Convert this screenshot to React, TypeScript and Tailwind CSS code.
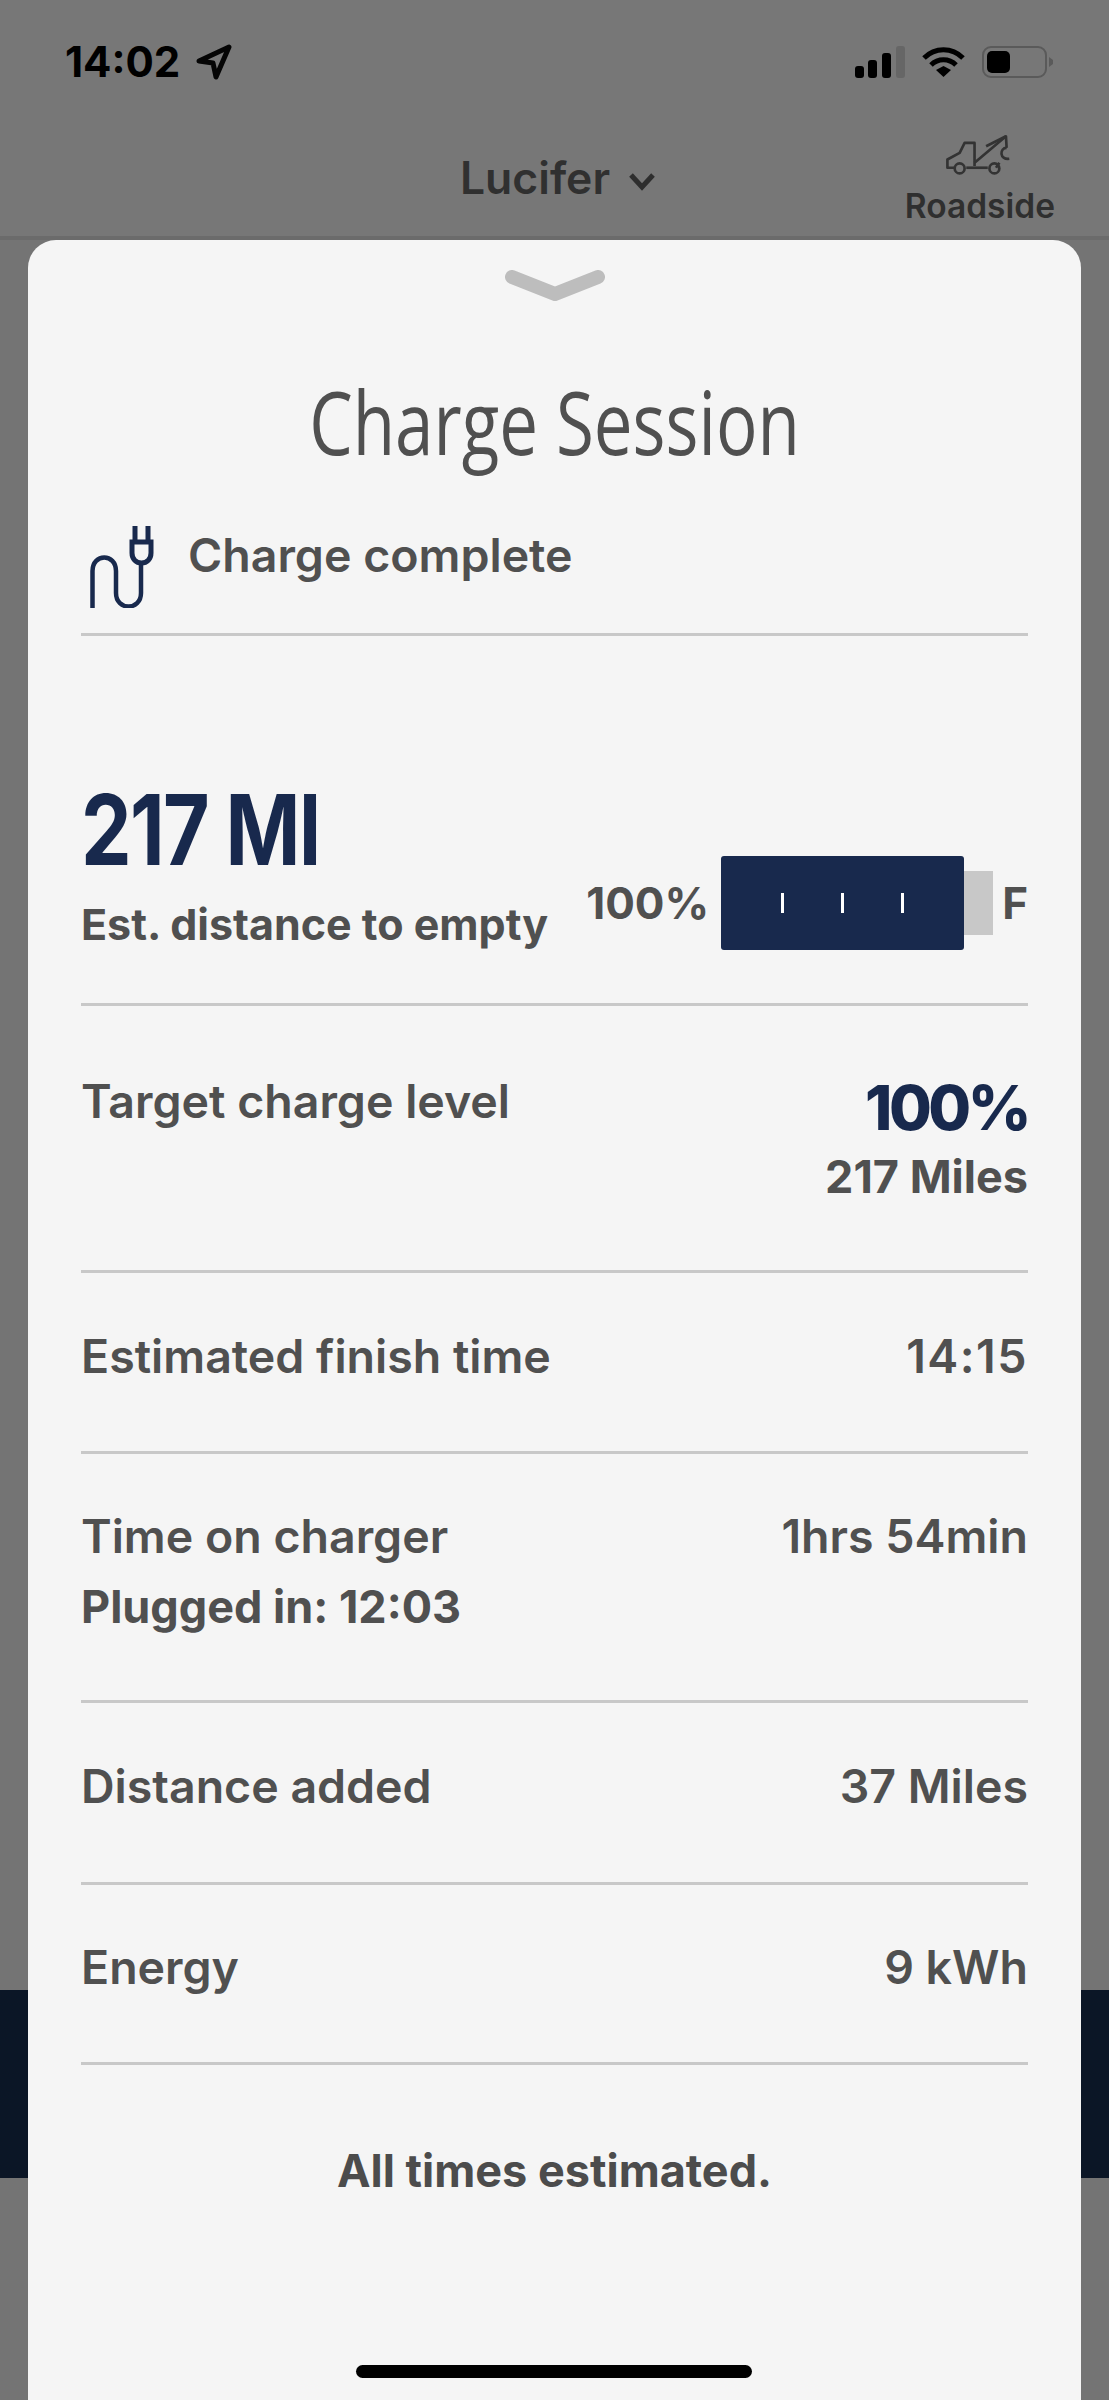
export default function App() {
  const text = "font-semibold text-[46.5px] leading-[56px] text-[#505050] whitespace-nowrap";
  return (
    <div className="relative w-[1109px] h-[2400px] overflow-hidden bg-[#747474] font-['Inter',sans-serif]">
      <header className="relative h-[240px] bg-[#777777] border-b-[4px] border-[#6b6b6b]">
        <div className="flex items-center justify-between pt-[38px] pl-[65px] pr-[55px] h-[86px]">
          <div className="flex items-center gap-[16px]">
            <span className="text-[42px] leading-[48px] font-bold text-black">14:02</span>
            <svg width="36" height="36" viewBox="0 0 36 36" fill="none" stroke="#050505" strokeWidth="5" strokeLinejoin="round"><path d="M3 17 L33 3 L20 33 L17 19 Z" /></svg>
          </div>
          <div className="flex items-center gap-[17px]">
            <svg width="50" height="32" viewBox="0 0 50 32">
              <rect x="0" y="20" width="9" height="12" rx="3" fill="#000" />
              <rect x="13" y="14" width="9" height="18" rx="3" fill="#000" />
              <rect x="27" y="7" width="9" height="25" rx="3" fill="#000" />
              <rect x="41" y="0" width="9" height="32" rx="3" fill="#666" />
            </svg>
            <svg width="43" height="32" viewBox="0 0 43 32" fill="none" stroke="#000" strokeWidth="5">
              <path d="M2 12 C13 1 30 1 41 12" />
              <path d="M9 19 C16 12 27 12 34 19" />
              <path d="M14 24 L21.5 20 L29 24 L21.5 31 Z" fill="#000" stroke="none" />
            </svg>
            <svg width="72" height="32" viewBox="0 0 72 32">
              <rect x="1" y="1" width="63" height="30" rx="8" fill="none" stroke="#5a5a5a" strokeWidth="2" />
              <rect x="5" y="5" width="23" height="22" rx="5" fill="#000" />
              <path d="M67 11 L71 14 L71 18 L67 21 Z" fill="#5a5a5a" />
            </svg>
          </div>
        </div>
        <div className="absolute left-0 right-0 top-[150px] flex justify-center">
          <div className="flex items-center gap-[18px] pl-[7px]">
            <span className="text-[44.5px] leading-[56px] font-semibold text-[#303030]">Lucifer</span>
            <svg width="28" height="20" viewBox="0 0 28 20" fill="none" stroke="#2e2e2e" strokeWidth="5" className="mt-[6px]"><path d="M3 4 L14 16 L25 4" /></svg>
          </div>
        </div>
        <div className="absolute right-[54px] top-[133px] flex flex-col items-center">
          <svg width="67" height="43" viewBox="440 400 200 130" fill="none" stroke="#333" strokeWidth="8" strokeLinejoin="round">
            <path d="M465 505 L443 505 L443 480 L480 460 L495 430 L525 430 L525 500" />
            <path d="M500 505 L565 505" />
            <path d="M525 490 L620 410 L622 445" />
            <path d="M560 440 L620 410" />
            <path d="M622 445 C600 445 600 482 630 478" />
            <path d="M590 505 L600 490" />
            <circle cx="480" cy="507" r="15" />
            <circle cx="585" cy="507" r="15" />
          </svg>
          <span className="mt-[10px] text-[33.5px] leading-[40px] font-semibold text-[#2f2f2f]">Roadside</span>
        </div>
      </header>

      <div className="mt-[1750px] h-[188px] bg-[#0b1626]" />

      <main className="absolute left-[28px] right-[28px] top-[240px] bottom-0 rounded-t-[28px] bg-[#f5f5f5] px-[53px]">
        <svg width="100" height="34" viewBox="0 0 100 34" className="absolute left-[477px] top-[30px]">
          <path d="M7 7 L50 24 L93 7" fill="none" stroke="#bdbdbd" strokeWidth="14" strokeLinecap="round" strokeLinejoin="round" />
        </svg>
        <h1 className="pt-[129px] text-center font-['Open_Sans',sans-serif] font-normal text-[#505050] text-[88px] leading-[104px] scale-x-[0.785]">
          Charge Session
        </h1>
        <div className="flex items-start h-[163px] border-b-[3px] border-[#c8c8c8] pt-[52px] pl-[9px]">
          <svg width="64" height="83" viewBox="0 0 64 83" fill="none" stroke="#18294d" strokeWidth="4.5">
            <path d="M2.5 83 L2.5 46 C2.5 28 26 28 26 46 L26 68 C26 86 51 86 51 68 L51 38" />
            <path d="M42 17 L61 17 L61 28 C61 34 57 38 51.5 38 C46 38 42 34 42 28 Z" strokeWidth="5" />
            <path d="M45 16 L45 1 M58 16 L58 1" strokeWidth="5" />
          </svg>
          <span className="ml-[34px] mt-[2px] font-semibold text-[46.5px] leading-[56px] text-[#505050] whitespace-nowrap">Charge complete</span>
        </div>

        <section className="flex items-end justify-between h-[370px] border-b-[3px] border-[#c8c8c8] pb-[52px]">
          <div>
            <div className="origin-left scale-x-[0.82] text-[98px] leading-[100px] font-bold tracking-[-2px] text-[#18294d] whitespace-nowrap">217 MI</div>
            <div className="mt-[17px] text-[43px] leading-[54px] font-bold text-[#505050] whitespace-nowrap">Est. distance to empty</div>
          </div>
          <div className="flex items-center mb-[1px]">
            <span className="text-[44px] leading-[54px] font-bold text-[#505050] whitespace-nowrap">100%</span>
            <div className="ml-[12px] flex items-center">
              <div className="flex items-center justify-center gap-[57px] w-[243px] h-[94px] rounded-[3px] bg-[#18294d]">
                <span className="w-[3px] h-[20px] bg-white" />
                <span className="w-[3px] h-[20px] bg-white" />
                <span className="w-[3px] h-[20px] bg-white" />
              </div>
              <div className="w-[29px] h-[64px] bg-[#c8c8c8]" />
            </div>
            <span className="ml-[9px] text-[44px] leading-[54px] font-bold text-[#505050]">F</span>
          </div>
        </section>

        <section className="flex justify-between h-[267px] border-b-[3px] border-[#c8c8c8] pt-[67px]">
          <span className={text}>Target charge level</span>
          <div className="flex flex-col items-end mt-[-1px]">
            <span className="text-[62px] leading-[72px] font-extrabold tracking-[-3.5px] text-[#18294d]">100%</span>
            <span className="mt-[5px] font-bold text-[45px] leading-[56px] text-[#505050] whitespace-nowrap">217 Miles</span>
          </div>
        </section>

        <section className="flex justify-between h-[181px] border-b-[3px] border-[#c8c8c8] pt-[55px]">
          <span className={text}>Estimated finish time</span>
          <span className={text + " tracking-[1.5px]"}>14:15</span>
        </section>

        <section className="flex justify-between h-[249px] border-b-[3px] border-[#c8c8c8] pt-[54px]">
          <div className="flex flex-col">
            <span className={text}>Time on charger</span>
            <span className="mt-[15px] text-[45px] leading-[56px] font-bold text-[#505050] whitespace-nowrap">Plugged in: 12:03</span>
          </div>
          <span className={text}>1hrs 54min</span>
        </section>

        <section className="flex justify-between h-[182px] border-b-[3px] border-[#c8c8c8] pt-[55px]">
          <span className={text}>Distance added</span>
          <span className={text}>37 Miles</span>
        </section>

        <section className="flex justify-between h-[180px] border-b-[3px] border-[#c8c8c8] pt-[54px]">
          <span className={text}>Energy</span>
          <span className={text}>9 kWh</span>
        </section>

        <p className="pt-[78px] text-center text-[45px] leading-[56px] font-bold text-[#4c4c4c]">All times estimated.</p>

        <div className="absolute left-[328px] top-[2125px] w-[396px] h-[13px] rounded-full bg-black" />
      </main>
    </div>
  );
}
